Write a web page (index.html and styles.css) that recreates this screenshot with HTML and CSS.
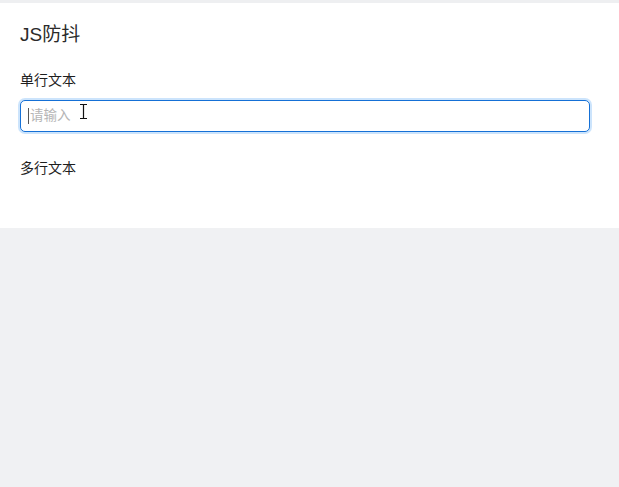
FILE: index.html
```html
<!DOCTYPE html>
<html lang="zh-CN">
<head>
<meta charset="utf-8">
<title>JS防抖</title>
<link rel="stylesheet" href="styles.css">
</head>
<body>
<div class="top-strip"></div>
<main class="panel">
  <h1 class="title">JS防抖</h1>
  <div class="label">单行文本</div>
  <div class="field">
    <div class="input">
      <span class="caret"></span><span class="placeholder">请输入</span>
    </div>
    <svg class="ibeam" width="9" height="17" viewBox="0 0 9 17">
      <path d="M1 1.5h2.5M5.5 1.5H8M4.5 2v13M1 15.5h2.5M5.5 15.5H8" stroke="#111" stroke-width="1.2" fill="none"/>
      <path d="M3 1.5h3M3 15.5h3" stroke="#111" stroke-width="1.2"/>
    </svg>
  </div>
  <div class="label label-second">多行文本</div>
</main>
</body>
</html>
```
FILE: styles.css
```css
html, body {
  margin: 0;
  padding: 0;
}
body {
  background: #f0f1f3;
  font-family: "Liberation Sans", "Noto Sans CJK SC", sans-serif;
  color: #222;
  width: 619px;
  height: 487px;
  overflow: hidden;
}
.top-strip {
  height: 3px;
  background: #eeeff1;
}
.panel {
  background: #ffffff;
  padding: 20px 29px 50px 20px;
  height: 155px;
}
.title {
  margin: 0;
  font-size: 19px;
  line-height: 24px;
  font-weight: normal;
  color: #2a2a2a;
}
.label {
  margin-top: 23px;
  font-size: 14px;
  line-height: 20px;
  color: #1e1e1e;
}
.label-second {
  margin-top: 26px;
}
.field {
  position: relative;
  margin-top: 10px;
}
.input {
  box-sizing: border-box;
  height: 32px;
  width: 570px;
  border: 1px solid #1570d6;
  border-radius: 5px;
  box-shadow: 0 0 0 2px rgba(24, 132, 240, 0.22);
  display: flex;
  align-items: center;
  padding-left: 7px;
  background: #fff;
}
.caret {
  display: inline-block;
  width: 1px;
  height: 16px;
  background: #555;
  margin-right: 1px;
}
.placeholder {
  font-size: 13.5px;
  color: #b5b5b5;
  line-height: 16px;
}
.ibeam {
  position: absolute;
  left: 59px;
  top: 3px;
}
```
